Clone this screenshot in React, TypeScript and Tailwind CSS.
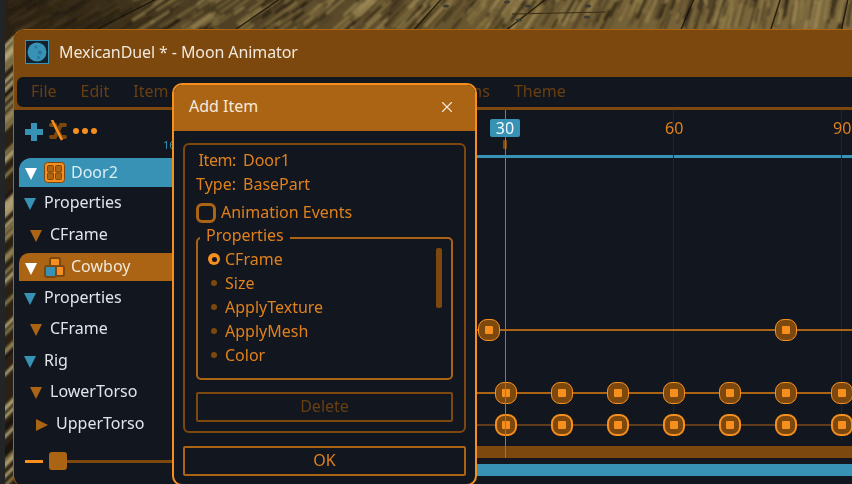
import { X } from 'lucide-react';

// ---- Wood floor behind the window (seeded so it draws the same every time) ----
function rand(seed: number) {
  const v = Math.sin(seed * 127.1) * 43758.5453;
  return v - Math.floor(v);
}

function slopeAt(x: number) {
  // boards run in perspective: shallow on the left, nearly upright on the right
  const deg = x < 250 ? 28 + x * 0.03 : x < 420 ? 35 + (x - 250) * 0.07 : Math.min(80, 47 + (x - 420) * 0.09);
  return Math.tan((deg * Math.PI) / 180);
}

const darkGrain = ['#1c150a', '#2a2110', '#3a2e18', '#4a3b20'];
const lightGrain = ['#1c150a', '#3a2e18', '#54432a', '#8a7645', '#a08c58', '#6a5832', '#94804c'];

const grain = Array.from({ length: 700 }, (_, i) => {
  const x = 5 + rand(i + 1) * 860;
  const y = rand(i + 501) * 36;
  const len = 10 + rand(i + 1001) * 30;
  const s = slopeAt(x);
  const dx = len / Math.sqrt(1 + s * s);
  const pool = x < 130 ? darkGrain : lightGrain;
  return {
    x1: x,
    y1: y,
    x2: x + dx,
    y2: y - dx * s,
    color: pool[Math.floor(rand(i + 1501) * pool.length)],
    w: 1.2 + rand(i + 2001) * 2,
    o: x < 130 ? 0.5 : 0.7,
  };
});

const sideGrain = Array.from({ length: 70 }, (_, i) => {
  const y = 29 + rand(i + 3001) * 460;
  return { y, color: rand(i + 3501) > 0.78 ? '#15110a' : rand(i + 3601) > 0.5 ? '#b3a474' : '#8b7b4e' };
});

const planks = [
  [92, 32, 170, -8],
  [232, 32, 290, -8],
  [412, 32, 446, -6],
  [504, 32, 560, -12],
  [680, 32, 696, -6],
  [770, 32, 782, -6],
  [841, 32, 849, -6],
];

function WoodFloor() {
  return (
    <svg className="absolute inset-0" width="852" height="484" viewBox="0 0 852 484">
      <defs>
        <linearGradient id="floor" x1="0" x2="1" y1="0" y2="0">
          <stop offset="0" stopColor="#2a2114" />
          <stop offset="0.25" stopColor="#4d3f24" />
          <stop offset="0.6" stopColor="#6f5c34" />
          <stop offset="1" stopColor="#7e6a3f" />
        </linearGradient>
        <filter id="soft">
          <feGaussianBlur stdDeviation="1" />
        </filter>
      </defs>
      <rect x="5" y="0" width="847" height="484" fill="url(#floor)" />
      <g filter="url(#soft)">
        {grain.map((g, i) => (
          <line key={i} x1={g.x1} y1={g.y1} x2={g.x2} y2={g.y2} stroke={g.color} strokeWidth={g.w} opacity={g.o} />
        ))}
        {sideGrain.map((g, i) => (
          <line key={i} x1="3" y1={g.y + 6} x2="15" y2={g.y - 6} stroke={g.color} strokeWidth="3" />
        ))}
      </g>
      {planks.map((p, i) => (
        <line key={i} x1={p[0]} y1={p[1]} x2={p[2]} y2={p[3]} stroke="#171108" strokeWidth="1.4" opacity="0.85" />
      ))}
      <line x1="512" y1="14" x2="606" y2="12" stroke="#3a2d14" strokeWidth="1" />
      {[[446, 6], [507, 2], [528, 6], [588, 6], [519, 20], [587, 17]].map((n, i) => (
        <ellipse key={i} cx={n[0]} cy={n[1]} rx="3" ry="1.6" fill="#3b3b36" />
      ))}
      <rect x="0" y="0" width="5" height="484" fill="#232425" />
    </svg>
  );
}

// ---- Small drawings ----
function Tri({ color, right = false }: { color: string; right?: boolean }) {
  return (
    <svg width="12" height="12" viewBox="0 0 12 12" className="mt-[3px] shrink-0">
      <polygon points={right ? '0,0 12,6 0,12' : '0,0 12,0 6,12'} fill={color} />
    </svg>
  );
}

function DoorIcon() {
  return (
    <svg width="21" height="21" viewBox="0 0 21 21" className="shrink-0">
      <rect x="0.5" y="0.5" width="20" height="20" rx="3" fill="#f78f1e" stroke="#7c480d" />
      <rect x="3.5" y="3.5" width="6" height="6.5" rx="1" fill="#ab6414" stroke="#7c480d" />
      <rect x="11.5" y="3.5" width="6" height="6.5" rx="1" fill="#ab6414" stroke="#7c480d" />
      <rect x="3.5" y="11" width="6" height="6.5" rx="1" fill="#ab6414" stroke="#7c480d" />
      <rect x="11.5" y="11" width="6" height="6.5" rx="1" fill="#ab6414" stroke="#7c480d" />
    </svg>
  );
}

function ModelIcon() {
  return (
    <svg width="21" height="21" viewBox="0 0 21 21" className="shrink-0">
      <rect x="6" y="1" width="10" height="10" rx="2" fill="#f78f1e" stroke="#7c480d" strokeWidth="2" />
      <rect x="11" y="9" width="9" height="10" rx="2" fill="#f78f1e" stroke="#7c480d" strokeWidth="2" />
      <rect x="1" y="9" width="11" height="11" rx="2" fill="#3792b5" stroke="#7c480d" strokeWidth="2" />
    </svg>
  );
}

function MoonIcon() {
  return (
    <svg width="24" height="24" viewBox="0 0 24 24" className="shrink-0">
      <rect x="0.5" y="0.5" width="23" height="23" fill="#12212c" stroke="#3792b5" />
      <circle cx="12" cy="12" r="9.5" fill="#3792b5" />
      <circle cx="15" cy="12.5" r="2" fill="#2b7797" />
      <circle cx="11" cy="7" r="1.5" fill="#2b7797" />
      <circle cx="13.5" cy="17.5" r="1.5" fill="#2b7797" />
    </svg>
  );
}

function ShuffleIcon() {
  return (
    <svg width="18" height="22" viewBox="0 0 18 22" className="shrink-0">
      <path d="M2 5h4l6 12h4M2 17h4l6-12h4" fill="none" stroke="#7c480d" strokeWidth="4" strokeLinecap="round" />
      <line x1="3" y1="0" x2="13" y2="20" stroke="#f78f1e" strokeWidth="2.5" />
    </svg>
  );
}

// ---- Left list ----
function TreeRow({ label, tri, pad, tight, right }: { label: string; tri: string; pad: string; tight?: boolean; right?: boolean }) {
  return (
    <div className={`flex items-center gap-[8px] text-[#dfe5ea] ${tight ? 'h-[31px]' : 'h-[32px]'} ${pad}`}>
      <Tri color={tri} right={right} />
      <span className={tight ? 'pb-[1px]' : ''}>{label}</span>
    </div>
  );
}

// ---- Timeline ----
function Keyframe({ x, thick }: { x: number; thick?: boolean }) {
  // x is the page position of the key's centre, the track starts at page x 172
  return (
    <div
      className={`absolute top-1/2 flex h-[22px] w-[22px] -translate-x-1/2 -translate-y-1/2 items-center justify-center rounded-[9px] border-[#f78f1e] bg-[#7c480d] ${thick ? 'border-2' : 'border'}`}
      style={{ left: x - 172 }}
    >
      <div className="h-[8px] w-[8px] rounded-[1px] bg-[#f78f1e]" />
    </div>
  );
}

function Track({ keys, thin }: { keys?: number[]; thin?: boolean }) {
  return (
    <div className="h-[31.5px] pt-[3px]">
      <div className="relative h-full">
        {keys && (
          <>
            <div className={`absolute inset-x-0 top-1/2 -translate-y-1/2 bg-[#ab6414] ${thin ? 'h-px' : 'h-[2px]'}`} />
            {keys.map(k => (
              <Keyframe key={k} x={k} thick={thin} />
            ))}
          </>
        )}
      </div>
    </div>
  );
}

const rigKeys = [505.5, 561.5, 618, 674, 730, 786, 842];

// ---- Add Item dialog ----
const propertyNames = ['Size', 'ApplyTexture', 'ApplyMesh', 'Color'];

function AddItemDialog() {
  return (
    <div className="absolute left-[172px] top-[83px] flex h-[403px] w-[305px] flex-col overflow-hidden rounded-[10px] border-2 border-[#f78f1e] bg-[#12161f] text-[#e0811d]">
      <div className="flex h-[46px] shrink-0 items-center justify-between bg-[#ab6414] pb-[3px] pl-[15px] pr-[19px] text-[#f6eadb]">
        <span className="pb-[2px]">Add Item</span>
        <X size={18} strokeWidth={1.5} />
      </div>

      <div className="flex flex-col gap-[13px] px-[9px] pt-[12px]">
        <div className="flex h-[290px] flex-col rounded-[6px] border-2 border-[#7c480d] px-[11px] pt-[3px]">
          <div className="flex h-[24px] items-center gap-[7px]">
            <span className="w-[40px] text-right tracking-[-0.4px]">Item:</span>
            <span>Door1</span>
          </div>
          <div className="flex h-[24px] items-center gap-[7px]">
            <span className="w-[40px] text-right">Type:</span>
            <span>BasePart</span>
          </div>
          <div className="mt-[7px] flex h-[20px] items-center gap-[5px]">
            <div className="h-[20px] w-[20px] rounded-[6px] border-[3px] border-[#ab6414]" />
            <span className="pb-[2px]">Animation Events</span>
          </div>

          <div className="relative mt-[14px] h-[143px] rounded-[5px] border-2 border-[#ab6414] pl-[10px] pt-[8px]">
            <span className="absolute -top-[12px] left-[2px] bg-[#12161f] px-[6px]">Properties</span>
            <div className="flex h-[24px] items-center gap-[5px]">
              <div className="flex h-[12px] w-[12px] items-center justify-center rounded-full bg-[#f78f1e]">
                <div className="h-[5px] w-[5px] rounded-full bg-[#12161f]" />
              </div>
              <span>CFrame</span>
            </div>
            {propertyNames.map(name => (
              <div key={name} className="flex h-[24px] items-center gap-[8px] pl-[3px]">
                <div className="h-[6px] w-[6px] rounded-full bg-[#7c480d]" />
                <span>{name}</span>
              </div>
            ))}
            <div className="absolute right-[9px] top-[9px] h-[60px] w-[6px] rounded-[2px] bg-[#7c480d]" />
          </div>

          <div className="mt-[12px] flex h-[30px] items-center justify-center rounded-[2px] border-2 border-[#7c480d] pb-[2px] text-[#6a3f10]">
            Delete
          </div>
        </div>

        <div className="flex h-[30px] items-center justify-center rounded-[2px] border-2 border-[#ab6414] pb-[2px]">OK</div>
      </div>
    </div>
  );
}

export default function App() {
  return (
    <div className="relative h-[484px] w-[852px] overflow-hidden font-['Noto_Sans',sans-serif] text-[16px] leading-none">
      <WoodFloor />

      <div className="relative ml-[13px] mt-[29px] flex h-[458px] w-[860px] flex-col overflow-hidden rounded-l-[12px] border-l border-t border-[#ab6414] bg-[#12161f]">
        {/* Title bar */}
        <div className="flex h-[47px] shrink-0 items-center gap-[10px] bg-[#7c480d] pb-[3px] pl-[11px] text-[#f1e7da]">
          <MoonIcon />
          <span className="tracking-[-0.1px]">MexicanDuel * - Moon Animator</span>
        </div>

        {/* Menu */}
        <div className="shrink-0 bg-[#7c480d] pb-[3px] pl-[3px]">
          <div className="flex h-[30px] items-center gap-[24px] rounded-l-[6px] bg-[#12161f] pb-[2px] pl-[14px] text-[#6a3f10]">
            <span>File</span>
            <span>Edit</span>
            <span>Item</span>
            <span className="ml-[238px]">Options</span>
            <span>Theme</span>
          </div>
        </div>

        <div className="flex min-h-0 flex-1">
          {/* Left panel */}
          <div className="relative w-[158px] shrink-0">
            <div className="flex h-[48px] items-start gap-[6px] pl-[11px] pt-[10px]">
              <svg width="18" height="20" viewBox="0 0 18 20" className="mt-[2px] shrink-0">
                <path d="M6 1h6v6h6v6h-6v6H6v-6H0V7h6z" fill="#3792b5" />
              </svg>
              <ShuffleIcon />
              <div className="mt-[8px] flex gap-[3px]">
                <div className="h-[6px] w-[6px] rounded-full bg-[#f78f1e]" />
                <div className="h-[6px] w-[6px] rounded-full bg-[#f78f1e]" />
                <div className="h-[6px] w-[6px] rounded-full bg-[#f78f1e]" />
              </div>
            </div>
            <span className="absolute left-[149px] top-[29px] text-[11px] text-[#3792b5]">16</span>

            <div className="ml-[5px] flex h-[29px] items-center gap-[7px] rounded-tl-[12px] bg-[#3792b5] pl-[6px] text-[#d9edf5]">
              <Tri color="#ffffff" />
              <DoorIcon />
              <span className="ml-[-1px] pb-[2px]">Door2</span>
            </div>
            <TreeRow label="Properties" tri="#3792b5" pad="pl-[10px]" tight />
            <TreeRow label="CFrame" tri="#ab6414" pad="pl-[16px]" />
            <div className="h-[31px] pt-[3px]">
              <div className="ml-[5px] flex h-full items-center gap-[7px] rounded-tl-[10px] bg-[#ab6414] pl-[6px] text-[#f1e7da]">
                <Tri color="#ffffff" />
                <ModelIcon />
                <span className="ml-[-1px] pb-[3px]">Cowboy</span>
              </div>
            </div>
            <TreeRow label="Properties" tri="#3792b5" pad="pl-[10px]" />
            <TreeRow label="CFrame" tri="#ab6414" pad="pl-[16px]" tight />
            <TreeRow label="Rig" tri="#3792b5" pad="pl-[10px]" />
            <TreeRow label="LowerTorso" tri="#ab6414" pad="pl-[16px]" tight />
            <TreeRow label="UpperTorso" tri="#ab6414" pad="pl-[22px]" right />

            <div className="mt-[13px] flex items-center pl-[11px]">
              <div className="h-[3px] w-[18px] bg-[#f78f1e]" />
              <div className="ml-[6px] h-[18px] w-[18px] rounded-[3px] bg-[#ab6414]" />
              <div className="h-[3px] flex-1 bg-[#7c480d]" />
            </div>
          </div>

          {/* Timeline */}
          <div className="relative flex-1">
            <div className="absolute bottom-[47px] left-[501px] top-0 w-px bg-[#1b2630]" />
            <div className="absolute bottom-[47px] left-[669px] top-0 w-px bg-[#1b2630]" />

            <div className="relative h-[45px]">
              <div className="absolute left-[318px] top-[9px] flex h-[18px] w-[30px] items-center justify-center rounded-[2px] bg-[#3792b5] text-[#f4fafc]">30</div>
              <div className="absolute left-[331px] top-[30px] h-[9px] w-[4px] rounded-[1px] bg-[#7c480d]" />
              <span className="absolute left-[493px] top-[10px] text-[#e0811d]">60</span>
              <span className="absolute left-[661px] top-[10px] text-[#e0811d]">90</span>
            </div>
            <div className="h-[3px] bg-[#3792b5]" />

            <div className="h-[29px]" />
            <Track />
            <Track />
            <Track />
            <Track />
            <Track keys={[488.5, 786]} />
            <Track />
            <Track keys={rigKeys} />
            <Track keys={rigKeys} thin />

            <div className="flex flex-col gap-[6px] pt-[7px]">
              <div className="h-[12px] bg-[#7c480d]" />
              <div className="h-[12px] bg-[#3792b5]" />
            </div>

            {/* Playhead */}
            <div className="absolute bottom-[29px] left-[333px] top-0 w-px bg-[#3f8fae]" />
          </div>
        </div>
      </div>

      <AddItemDialog />
    </div>
  );
}
